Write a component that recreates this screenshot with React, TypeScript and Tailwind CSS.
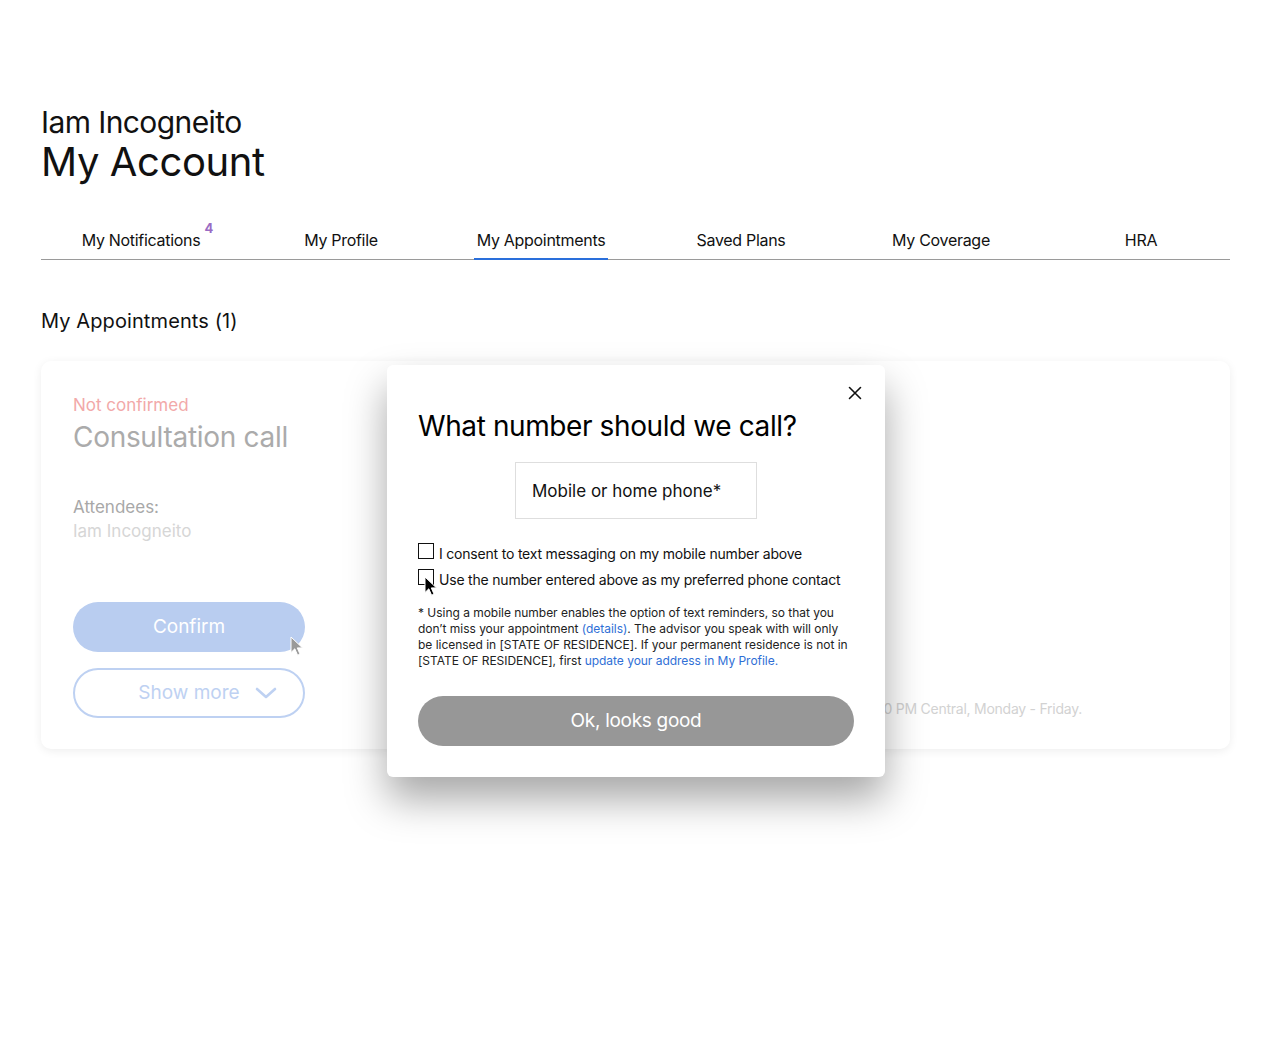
import React from "react";

function Cursor({ color, className }: { color: string; className: string }) {
  return (
    <svg className={className} width="14" height="21" viewBox="0 0 14 21">
      <path
        d="M1 1 L1 16.5 L4.8 12.8 L7.6 19.2 L10 18.1 L7.3 11.9 L12.5 11.9 Z"
        fill={color}
        stroke="#ffffff"
        strokeWidth="1"
        strokeLinejoin="round"
      />
    </svg>
  );
}

const tabs = ["My Notifications", "My Profile", "My Appointments", "Saved Plans", "My Coverage", "HRA"];

export default function App() {
  return (
    <div
      className="relative min-h-[1050px] w-full overflow-hidden bg-white text-[#111]"
      style={{ fontFamily: "Inter, 'Noto Sans', sans-serif" }}
    >
      <div className="px-[41px] pt-[104px]">
        <div className="text-[30px] leading-[36px] tracking-[-0.6px]">Iam Incogneito</div>
        <div className="text-[40px] leading-[44px] tracking-[-0.4px]">My Account</div>

        <div className="mt-[44px] flex border-b border-[#9a9a9a]">
          {tabs.map((t, i) => (
            <div key={t} className="flex w-[200px] shrink-0 justify-center text-[16px] leading-[24px] tracking-[-0.3px]">
              {i === 2 ? (
                <span className="-mb-px border-b-2 border-[#2a6fdb] px-[3px] pb-[6px]">{t}</span>
              ) : (
                <span className="relative pb-[7px]">
                  {t}
                  {i === 0 && (
                    <span className="absolute -right-[13px] -top-[12px] text-[13px] font-bold tracking-normal text-[#9a6bc4]">4</span>
                  )}
                </span>
              )}
            </div>
          ))}
        </div>

        <div className="mt-[47px] text-[20px] leading-[28px] tracking-[0.1px]">My Appointments (1)</div>

        <div className="relative mt-[26px] flex rounded-[10px] bg-white px-[32px] pb-[31px] pt-[32px] shadow-[0_2px_10px_rgba(0,0,0,0.07)]">
          <div className="flex w-[232px] flex-col">
            <div className="text-[17px] leading-[24px] text-[#f2a9a9]">Not confirmed</div>
            <div className="mt-[2px] whitespace-nowrap text-[28px] leading-[36px] tracking-[-0.3px] text-[#ababab]">Consultation call</div>
            <div className="mt-[40px] text-[17px] leading-[24px] text-[#a8a8a8]">Attendees:</div>
            <div className="text-[17px] leading-[24px] text-[#d6d6d6]">Iam Incogneito</div>
            <div className="mt-[59px] flex h-[50px] w-[232px] items-center justify-center rounded-full bg-[#b9cdf0] pt-[1px] text-[19px] text-white">
              Confirm
            </div>
            <div className="relative mt-[16px] flex h-[50px] w-[232px] items-center justify-center rounded-full border-2 border-[#bed1f2] text-[19px] text-[#bed1f2]">
              Show more
              <svg className="absolute right-[26px] top-[15px]" width="22" height="16" viewBox="0 0 22 16">
                <path d="M2 4 L11 12 L20 4" fill="none" stroke="#bed1f2" strokeWidth="2.6" strokeLinecap="round" strokeLinejoin="round" />
              </svg>
            </div>
          </div>
          <div className="flex flex-1 flex-col items-end justify-end pr-[116px]">
            <div className="-mb-[1px] whitespace-nowrap text-[14px] leading-[20px] tracking-[-0.25px] text-[#d2d2d2]">
              Our advisors are available 8:00 AM - 5:00 PM Central, Monday - Friday.
            </div>
          </div>
          <Cursor color="#9a9a9a" className="absolute left-[249px] top-[275px]" />
        </div>
      </div>

      <div className="absolute left-[387px] top-[365px] w-[498px] rounded-[6px] bg-white px-[31px] pb-[31px] pt-[43px] shadow-[0_22px_40px_rgba(0,0,0,0.35)]">
        <svg className="absolute right-[23px] top-[21px]" width="14" height="14" viewBox="0 0 14 14">
          <path d="M1.5 1.5 L12.5 12.5 M12.5 1.5 L1.5 12.5" stroke="#111" strokeWidth="1.6" strokeLinecap="round" />
        </svg>
        <div className="whitespace-nowrap text-[28px] leading-[36px] tracking-[-0.4px] text-black">What number should we call?</div>
        <div className="mt-[18px] flex justify-center">
          <div className="flex h-[57px] w-[242px] items-center border border-[#dedede] px-[16px] pt-[3px] text-[17px] text-[#111]">
            Mobile or home phone*
          </div>
        </div>
        <div className="mt-[24px] flex flex-col gap-[5px]">
          <div className="flex items-start">
            <div className="h-[16px] w-[16px] shrink-0 border-[1.5px] border-[#111]" />
            <div className="ml-[5px] mt-[1px] whitespace-nowrap text-[14px] leading-[20px] tracking-[-0.2px]">I consent to text messaging on my mobile number above</div>
          </div>
          <div className="flex items-start">
            <div className="h-[16px] w-[16px] shrink-0 border-[1.5px] border-[#111]" />
            <div className="ml-[5px] mt-[1px] whitespace-nowrap text-[14px] leading-[20px] tracking-[-0.2px]">Use the number entered above as my preferred phone contact</div>
          </div>
        </div>
        <div className="mt-[15px] whitespace-nowrap text-[12px] leading-[16px] tracking-[-0.03px] text-[#222]">
          * Using a mobile number enables the option of text reminders, so that you
          <br />
          don’t miss your appointment <span className="text-[#2f6fd6]">(details)</span>. The advisor you speak with will only
          <br />
          be licensed in [STATE OF RESIDENCE]. If your permanent residence is not in
          <br />
          [STATE OF RESIDENCE], first <span className="text-[#2f6fd6]">update your address in My Profile.</span>
        </div>
        <div className="mt-[27px] flex h-[50px] w-full items-center justify-center rounded-full bg-[#979797] text-[19px] tracking-[-0.3px] text-white">
          Ok, looks good
        </div>
        <Cursor color="#000000" className="absolute left-[37px] top-[211px]" />
      </div>
    </div>
  );
}
